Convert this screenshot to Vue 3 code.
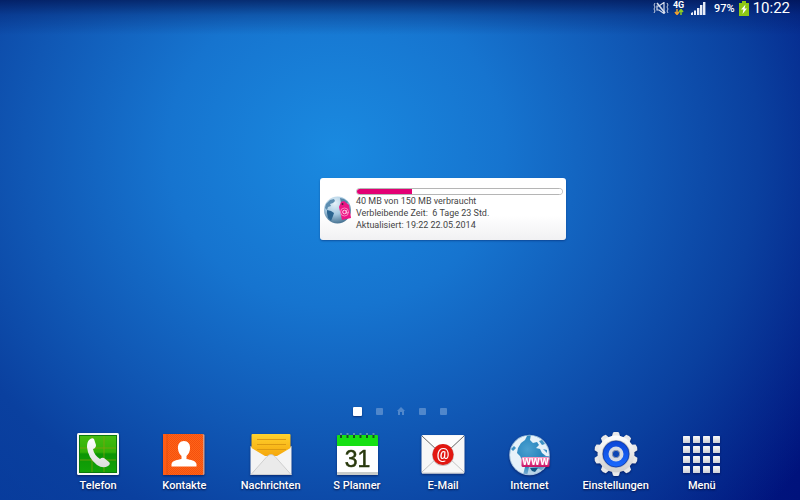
<template>
  <div class="screen">
    <header class="status-bar">
      <svg class="mute" viewBox="0 0 16 12" aria-label="Vibration">
        <path d="M4 4h2l5-3.500v11L6 8H4z" fill="none" stroke="#d5dcec" stroke-width="1.200" />
        <path d="M4 1l8 10" stroke="#d5dcec" stroke-width="1.600" />
        <path d="M2 1L1 3l1 2-1 2 1 2-1 2M14 1l1 2-1 2 1 2-1 2 1 2" fill="none" stroke="#c4cde0" />
      </svg>
      <div class="network">
        <span>4G</span>
        <svg viewBox="0 0 10 6">
          <path d="M3 0v4M1 3l2 2.500L5 3" fill="none" stroke="#f0a030" stroke-width="1.500" />
          <path d="M7 6V2M5 3l2-2.500L9 3" fill="none" stroke="#8fce20" stroke-width="1.500" />
        </svg>
      </div>
      <svg class="signal" viewBox="0 0 15 14" fill="#e8edf8">
        <path d="M0 14v-2l2-1v3zM3 14V9.500h2V14zM6 14V7h2.400v7zM9 14V4h2.400v10zM12 14V1h2.400v13z" />
      </svg>
      <span class="percent">97%</span>
      <svg class="battery" viewBox="0 0 10 15">
        <path d="M3 0h4v2h3v13H0V2h3z" fill="#8cc815" />
        <path d="M6.500 3.500L2 8.500h2.500l-1 4.500L8 7.500H5.500z" fill="#fff" />
      </svg>
      <time class="clock">10:22</time>
    </header>

    <main class="workspace">
      <section class="usage">
        <svg class="usage-icon" viewBox="0 0 30 30">
          <defs>
            <radialGradient id="sea" cx="40%" cy="25%" r="75%">
              <stop offset="0" stop-color="#e6f2f9" />
              <stop offset="0.550" stop-color="#a5c8e0" />
              <stop offset="1" stop-color="#4a7594" />
            </radialGradient>
          </defs>
          <circle cx="14.500" cy="15" r="13.500" fill="url(#sea)" />
          <path d="M3 9l4-4 4-1 1 2-2 2-3 1 1 2-3 1-1 3-2-2z" fill="#5c8db0" />
          <path d="M4 15l4 1 3 2-1 3-2 5-3-3-1-5z" fill="#2c6590" />
          <path d="M17 3l4 1 4 3-1 2-3-2-3 1z" fill="#5686a8" />
          <path d="M18 7l3-1 5 4 2 13-9 2-3-13z" fill="#ec1685" />
          <circle cx="19.500" cy="9" r="1" fill="#3f2840" />
          <circle cx="21.500" cy="17" r="4" fill="none" stroke="#ff9dcc" stroke-width="0.800" />
          <circle cx="21.500" cy="17" r="1.800" fill="none" stroke="#ffd1e8" />
          <path d="M23.300 15v3q1 1 2-1" fill="none" stroke="#ffd1e8" stroke-width="0.800" />
        </svg>
        <div class="usage-info">
          <progress :value="40" :max="150" aria-label="Datenverbrauch"></progress>
          <p>40 MB von 150 MB verbraucht</p>
          <p>Verbleibende Zeit:&nbsp; 6 Tage 23 Std.</p>
          <p>Aktualisiert: 19:22 22.05.2014</p>
        </div>
      </section>
    </main>

    <nav class="pages" aria-label="Seiten">
      <button
        v-for="page in 5"
        :key="page"
        :class="{ active: page === current, home: page === 3 }"
        :aria-label="'Seite ' + page"
        @click="current = page"
      >
        <svg v-if="page === 3" viewBox="0 0 8 8"><path d="M4 0l4 4H7v4H5V5H3v3H1V4H0z" /></svg>
      </button>
    </nav>

    <footer class="dock">
      <button v-for="app in apps" :key="app.id" class="app">
        <svg v-if="app.id === 'phone'" viewBox="0 0 44 44">
          <defs>
            <linearGradient id="green" x2="0" y2="1">
              <stop offset="0" stop-color="#45bd10" />
              <stop offset="0.450" stop-color="#32b008" />
              <stop offset="0.500" stop-color="#0c9604" />
              <stop offset="1" stop-color="#13a308" />
            </linearGradient>
            <linearGradient id="paper" x2="0" y2="1">
              <stop offset="0" stop-color="#fff" />
              <stop offset="1" stop-color="#dcdcdc" />
            </linearGradient>
          </defs>
          <rect x="1" y="1" width="42" height="42" rx="1.500" fill="#f6f8f4" />
          <rect x="3.500" y="3.500" width="37" height="37" fill="url(#green)" stroke="#0b7a0a" />
          <path d="M16 4v36M28 4v36M4 16h36M4 28h36" stroke="#8a9d10" stroke-width="0.700" />
          <path d="M13 8q3-3 5-1l2 6q0 3-3 4 1 6 7 10 2-2 4-1l5 4q2 2-1 4-5 3-11-1-9-7-10-18 0-5 2-7z" fill="url(#paper)" />
        </svg>

        <svg v-else-if="app.id === 'contacts'" viewBox="0 0 44 44">
          <defs>
            <pattern id="weave" width="2" height="2" patternUnits="userSpaceOnUse">
              <rect width="2" height="2" fill="#ff6418" />
              <path d="M0 0h1v1H0zM1 1h1v1H1z" fill="#f4500e" />
            </pattern>
          </defs>
          <rect x="4" y="2" width="38.500" height="41" rx="1.500" fill="#d99a80" />
          <rect x="1" y="2" width="40" height="41" rx="1" fill="url(#weave)" />
          <path d="M1 2h4v41H1z" fill="#ff5c14" />
          <path d="M5 2v41" stroke="#d94810" stroke-width="0.700" />
          <path d="M22 9c-4 0-6.500 3-6 8 .3 3 1.500 5 3.500 7v3c-4 1-9 1-10 5v2.500h25V32c-1-4-6-4-10-5v-3c2-2 3.200-4 3.500-7 .5-5-2-8-6-8z" fill="#fff" />
        </svg>

        <svg v-else-if="app.id === 'messages'" viewBox="0 0 44 44">
          <defs>
            <linearGradient id="note" x2="0" y2="1">
              <stop offset="0" stop-color="#ffd22e" />
              <stop offset="1" stop-color="#f5a70c" />
            </linearGradient>
          </defs>
          <path d="M1.500 14l20 12 21-12v28q0 1-1 1h-39q-1 0-1-1z" fill="#f4f4f4" />
          <path d="M2.500 3q0-1 1-1h37q1 0 1 1v13L28 24H16L2.500 16z" fill="url(#note)" />
          <path d="M8 7.500h29M8 12.500h29M8 17.500h29" stroke="#dc9a12" />
          <path d="M2 42.500l16-18q4-4 8 0l16 18" fill="#eaeaea" stroke="#c7c7c7" stroke-width="0.800" />
          <path d="M1.500 42.500h41" stroke="#d0d0d0" />
        </svg>

        <svg v-else-if="app.id === 'planner'" viewBox="0 0 44 44">
          <path d="M2 4h41v38q0 1-1 1H3q-1 0-1-1z" fill="#fff" />
          <path d="M2 40h41v2q0 1-1 1H3q-1 0-1-1z" fill="#c9ccca" />
          <path d="M2 4q0-1 1-1h39q1 0 1 1v10H2z" fill="#16e013" />
          <path d="M6 3v3M12.500 3v3M19 3v3M25.500 3v3M32 3v3M38.500 3v3" stroke="#174f20" stroke-width="2" />
          <path d="M5 2h2M11.500 2h2M18 2h2M24.500 2h2M31 2h2M37.500 2h2" stroke="#a8c8c0" />
          <text class="day" x="22.500" y="35" text-anchor="middle">31</text>
        </svg>

        <svg v-else-if="app.id === 'mail'" viewBox="0 0 44 44">
          <rect x="0.500" y="3" width="43" height="38.500" rx="1.500" fill="#f7f7f7" />
          <path d="M1 40l15-14M43 40L28 26" stroke="#c4c4c4" />
          <path d="M1 4l16 15q5 4 10 0L43 4" fill="#fdfdfd" stroke="#555" stroke-width="0.900" />
          <path d="M1 41h42" stroke="#cfcfcf" />
          <circle cx="22" cy="23" r="11" fill="#c9bcbc" />
          <circle cx="22" cy="22.500" r="10.500" fill="#e21710" />
          <text class="at" x="22" y="27" text-anchor="middle">@</text>
        </svg>

        <svg v-else-if="app.id === 'internet'" viewBox="0 0 44 44">
          <defs>
            <radialGradient id="ocean" cx="45%" cy="35%" r="70%">
              <stop offset="0" stop-color="#4aa0d0" />
              <stop offset="0.600" stop-color="#2583bb" />
              <stop offset="1" stop-color="#8fb6d6" />
            </radialGradient>
            <linearGradient id="ribbon" x2="0" y2="1">
              <stop offset="0" stop-color="#f5a0c4" />
              <stop offset="0.500" stop-color="#e8408c" />
              <stop offset="1" stop-color="#c21362" />
            </linearGradient>
            <clipPath id="globe"><circle cx="22.500" cy="23" r="19.500" /></clipPath>
          </defs>
          <circle cx="22.500" cy="23" r="20.300" fill="#a9c3df" />
          <circle cx="22.500" cy="23" r="19.500" fill="url(#ocean)" />
          <g clip-path="url(#globe)" fill="#e6f2f9">
            <path d="M2 4h18l-2 4-4 3-3 5-1 5 3 3 3 6 2 5-2 8H2z" />
            <path d="M24 2h8l8 8 4 14h-5l-4-3-2-4-4-1 3-3-2-3-4 1-3-3z" />
            <path d="M22 35l8 1 6 3-5 5H20z" opacity="0.600" />
          </g>
          <path d="M4 17l3-3 2 2-3 3zM32 9l3-1 3 4-3 1zM36 17l4 1v3z" fill="#3d92c4" />
          <path d="M23 36h8l-3 4-3-1z" fill="#135584" />
          <rect x="14.500" y="25" width="28" height="10" rx="1.500" fill="url(#ribbon)" />
          <text class="www" x="28.500" y="33" text-anchor="middle">WWW</text>
        </svg>

        <svg v-else-if="app.id === 'settings'" viewBox="0 0 44 44">
          <defs>
            <linearGradient id="metal" x2="0" y2="1">
              <stop offset="0" stop-color="#fff" />
              <stop offset="1" stop-color="#cfcfcf" />
            </linearGradient>
            <linearGradient id="blue" x2="0" y2="1">
              <stop offset="0" stop-color="#0c45d6" />
              <stop offset="1" stop-color="#1c6bff" />
            </linearGradient>
          </defs>
          <path
            v-for="tooth in 10"
            :key="tooth"
            d="M17.500 6l1.500-5.500q3-1.500 6 0L26.500 6z"
            fill="#e9e9e9"
            :transform="`rotate(${tooth * 36} 22 22)`"
          />
          <circle cx="22" cy="22" r="18.500" fill="url(#metal)" />
          <circle cx="22" cy="22" r="14" fill="#b9bbc0" />
          <circle cx="22" cy="22" r="13" fill="url(#blue)" stroke="#0b36a4" stroke-width="0.800" />
          <circle cx="22" cy="22" r="7.500" fill="#d6dae3" />
          <circle cx="22" cy="22" r="3.700" fill="#0b45b5" stroke="#8e98ad" />
        </svg>

        <svg v-else viewBox="0 0 44 44" fill="url(#tile)">
          <defs>
            <linearGradient id="tile" x2="0" y2="1">
              <stop offset="0" stop-color="#fafafa" />
              <stop offset="1" stop-color="#cdd0d8" />
            </linearGradient>
          </defs>
          <template v-for="row in 4" :key="row">
            <rect v-for="col in 4" :key="col" :x="col * 10 - 7" :y="row * 10 - 6" width="7" height="7" rx="0.500" />
          </template>
        </svg>

        <span>{{ app.label }}</span>
      </button>
    </footer>
  </div>
</template>

<script setup>
import { ref } from 'vue';

const current = ref(1);

const apps = [
  { id: 'phone', label: 'Telefon' },
  { id: 'contacts', label: 'Kontakte' },
  { id: 'messages', label: 'Nachrichten' },
  { id: 'planner', label: 'S Planner' },
  { id: 'mail', label: 'E-Mail' },
  { id: 'internet', label: 'Internet' },
  { id: 'settings', label: 'Einstellungen' },
  { id: 'menu', label: 'Menü' },
];
</script>

<style>
body {
  margin: 0;
}
</style>

<style scoped>
.screen {
  display: flex;
  flex-direction: column;
  min-height: 100vh;
  box-sizing: border-box;
  padding-bottom: 7px;
  font-family: Roboto, "Liberation Sans", sans-serif;
  color: #fff;
  background:
    linear-gradient(rgba(0, 15, 75, 0.7), rgba(0, 20, 90, 0.3) 3%, transparent 7%),
    radial-gradient(ellipse 60% 90% at 42% 30%, #1a8ae0 0%, #1674cf 35%, #1057b4 65%, #0a409f 88%, rgba(5, 44, 140, 0) 120%),
    linear-gradient(90deg, #06389a, #052c8c 50%, #00127c);
}
button {
  padding: 0;
  border: 0;
  background: none;
  font-family: inherit;
  color: inherit;
  cursor: pointer;
}

.status-bar {
  display: flex;
  align-items: center;
  justify-content: flex-end;
  height: 16px;
  padding-right: 10px;
}
.mute {
  width: 16px;
  height: 12px;
  margin-right: 3px;
}
.network {
  display: flex;
  flex-direction: column;
  align-items: center;
  width: 13px;
  margin-right: 6px;
  font-size: 9px;
  font-weight: 700;
  line-height: 8px;
}
.network svg {
  width: 10px;
  height: 6px;
}
.signal {
  width: 15px;
  height: 14px;
  margin-right: 8px;
}
.percent {
  margin-right: 4px;
  font-size: 11px;
  font-weight: 500;
}
.battery {
  width: 10px;
  height: 15px;
  margin-right: 4px;
}
.clock {
  font-size: 15px;
}

.workspace {
  flex: 1;
  display: flex;
  align-items: center;
  padding-left: 40%;
  padding-bottom: 4px;
}
.usage {
  display: flex;
  align-items: center;
  gap: 3px;
  width: 240px;
  padding: 10px 3px 9px;
  border-radius: 3px;
  background: linear-gradient(#fff 60%, #f1f1f3);
  box-shadow: 0 1px 2px rgba(0, 20, 80, 0.4);
  color: #444;
}
.usage-icon {
  flex: none;
  width: 30px;
  height: 30px;
}
.usage-info {
  flex: 1;
}
.usage-info p {
  margin: 0;
  font-size: 9px;
  line-height: 12px;
}
progress {
  display: block;
  appearance: none;
  box-sizing: border-box;
  width: 100%;
  height: 7px;
  border: 1px solid #b5b5b5;
  border-radius: 4px;
  overflow: hidden;
  background: #fff;
}
progress::-webkit-progress-bar {
  background: #fff;
}
progress::-webkit-progress-value {
  background: #e20074;
}

.pages {
  display: flex;
  justify-content: center;
  align-items: center;
  gap: 14px;
  height: 10px;
  margin-bottom: 16px;
}
.pages button {
  width: 7px;
  height: 7px;
  border-radius: 1px;
  background: #5087cb;
}
.pages button.active {
  width: 9px;
  height: 9px;
  background: #fff;
  box-shadow: 0 1px 2px rgba(0, 0, 50, 0.5);
}
.pages button.home {
  width: 8px;
  height: 8px;
  background: none;
}
.pages svg {
  display: block;
  fill: #5087cb;
}

.dock {
  display: grid;
  grid-template-columns: repeat(8, 1fr);
  padding: 0 55px;
}
.app {
  display: flex;
  flex-direction: column;
  align-items: center;
  gap: 3px;
  font-size: 11px;
  font-weight: 500;
  line-height: 14px;
  text-shadow: 0 1px 2px rgba(0, 0, 40, 0.8);
}
.app svg {
  width: 44px;
  height: 44px;
  filter: drop-shadow(0 1px 1px rgba(0, 0, 50, 0.5));
}
.app text {
  text-shadow: none;
}
.day {
  font-family: "Liberation Sans", Arial, sans-serif;
  font-size: 23px;
  font-weight: 400;
  fill: #28380c;
  stroke: #28380c;
  stroke-width: 0.5px;
}
.at {
  font-size: 14px;
  fill: #fff;
}
.www {
  font-family: "DejaVu Sans", sans-serif;
  font-size: 8px;
  font-weight: 700;
  fill: #fff;
}
</style>
